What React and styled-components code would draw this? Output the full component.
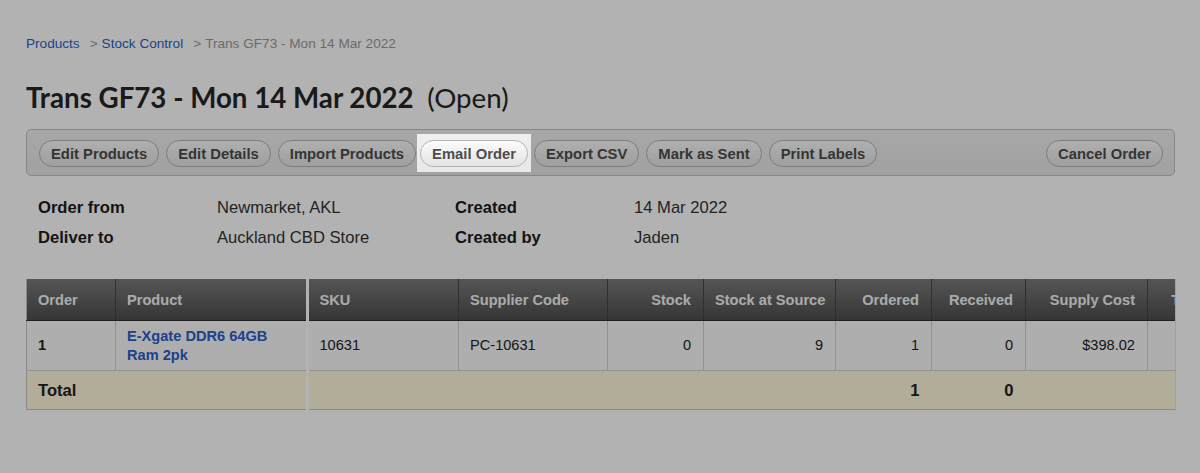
import React from "react";
import styled, { createGlobalStyle } from "styled-components";

const GlobalStyle = createGlobalStyle`
  html, body {
    margin: 0;
    padding: 0;
    background: #ffffff;
    min-height: 100%;
  }
  body {
    font-family: "Liberation Sans", Arial, Helvetica, sans-serif;
    color: #222;
    overflow: hidden;
  }
`;

const Page = styled.div`
  box-sizing: border-box;
  min-height: 100vh;
  padding: 36px 25px 0 26px;
`;

const Breadcrumb = styled.div`
  display: flex;
  align-items: center;
  font-size: 13.6px;
  line-height: 16px;
  color: #9a9a9a;
`;

const Crumb = styled.a`
  color: #2a5ec9;
  text-decoration: none;
`;

const Sep = styled.span`
  margin: 0 4px 0 10px;
`;

const Title = styled.h1`
  margin: 29px 0 0;
  font-family: Lato, "Open Sans", sans-serif;
  font-size: 27.7px;
  line-height: 34px;
  font-weight: 700;
  color: #262626;
`;

const Status = styled.span`
  font-weight: 400;
  margin-left: 7px;
`;

const Toolbar = styled.div`
  margin-top: 14px;
  display: flex;
  align-items: center;
  gap: 7px;
  padding: 10px 11px 8px 12px;
  border: 1px solid #c2c2c2;
  border-radius: 5px;
  background: linear-gradient(#f0f0f0, #e7e7e7);
`;

const Button = styled.button`
  height: 27px;
  padding: 0 11px;
  border: 1px solid #b2b2b2;
  border-radius: 14px;
  background: linear-gradient(#fbfbfb, #e4e4e4);
  font-family: "Liberation Sans", Arial, sans-serif;
  font-size: 14.8px;
  font-weight: 700;
  color: #4d4d4d;
  cursor: pointer;
  margin-left: ${(p) => (p.$push ? "auto" : "0")};
`;

// the highlighted button: everything else on the page gets dimmed
const Spotlight = styled.span`
  position: relative;
  z-index: 10;
  display: flex;
  padding: 6px 3px 5px;
  margin: -6px -4px -5px -6px;
  box-shadow: 0 0 0 3000px rgba(0, 0, 0, 0.3);
`;

const Details = styled.div`
  display: grid;
  grid-template-columns: 179px 238px 179px 1fr;
  row-gap: 11px;
  padding: 22px 12px 0;
  font-size: 16.6px;
  line-height: 19px;
`;

const Label = styled.div`
  font-weight: 700;
  color: #1c1c1c;
`;

const Value = styled.div`
  color: #333;
`;

const Tables = styled.div`
  margin-top: 32px;
  display: flex;
  gap: 3px;
  align-items: flex-start;
`;

const Scroll = styled.div`
  flex: none;
  width: 866px;
  min-width: 0;
  overflow: hidden;
  border-right: 1px solid #e6e6e6;
`;

const Table = styled.table`
  border-collapse: collapse;
  table-layout: fixed;
  font-size: 14.6px;
  width: ${(p) => p.$width}px;
  ${(p) => (p.$framed ? "border-left: 1px solid #c4c4c4;" : "")}
  border-bottom: 1px solid #c4c4c4;
`;

const Th = styled.th`
  height: 41px;
  padding: 0 12px 0 11px;
  text-align: ${(p) => (p.$right ? "right" : "left")};
  font-weight: 700;
  color: #f4f4f4;
  background: linear-gradient(#7a7a7a, #4e4e4e);
  border-left: 1px solid #444;
  border-bottom: 1px solid #2e2e2e;
  white-space: nowrap;
  overflow: hidden;
  &:first-child {
    border-left: none;
  }
`;

const Td = styled.td`
  height: ${(p) => (p.$total ? 38 : 49)}px;
  padding: 0 12px 0 11px;
  text-align: ${(p) => (p.$right ? "right" : "left")};
  background: ${(p) => (p.$total ? "#fff8dc" : "#fafafa")};
  border-left: ${(p) => (p.$total ? "none" : "1px solid #d2d2d2")};
  border-top: 1px solid #d2d2d2;
  font-weight: ${(p) => (p.$bold ? 700 : 400)};
  font-size: ${(p) => (p.$big ? 16.6 : 14.6)}px;
  color: #222;
  line-height: 19px;
  white-space: nowrap;
  &:first-child {
    border-left: none;
  }
`;

const ProductLink = styled.a`
  display: block;
  white-space: normal;
  color: #2a5ec9;
  font-weight: 700;
  text-decoration: none;
`;

const buttons = [
  "Edit Products",
  "Edit Details",
  "Import Products",
  "Email Order",
  "Export CSV",
  "Mark as Sent",
  "Print Labels",
];

const columns = [
  { name: "SKU", width: 150 },
  { name: "Supplier Code", width: 149 },
  { name: "Stock", width: 96, right: true },
  { name: "Stock at Source", width: 132, right: true },
  { name: "Ordered", width: 96, right: true },
  { name: "Received", width: 94, right: true },
  { name: "Supply Cost", width: 122, right: true },
  { name: "Total Cost", width: 106, right: true },
];

const row = ["10631", "PC-10631", "0", "9", "1", "0", "$398.02", ""];
const totals = ["", "", "", "", "1", "0", "", ""];

export default function App() {
  const rightWidth = columns.reduce((s, c) => s + c.width, 0);
  return (
    <>
      <GlobalStyle />
      <Page>
        <Breadcrumb>
          <Crumb href="#">Products</Crumb>
          <Sep>&gt;</Sep>
          <Crumb href="#">Stock Control</Crumb>
          <Sep>&gt;</Sep>
          <span>Trans GF73 - Mon 14 Mar 2022</span>
        </Breadcrumb>

        <Title>
          Trans GF73 - Mon 14 Mar 2022 <Status>(Open)</Status>
        </Title>

        <Toolbar>
          {buttons.map((b) =>
            b === "Email Order" ? (
              <Spotlight key={b}>
                <Button>{b}</Button>
              </Spotlight>
            ) : (
              <Button key={b}>{b}</Button>
            )
          )}
          <Button $push>Cancel Order</Button>
        </Toolbar>

        <Details>
          <Label>Order from</Label>
          <Value>Newmarket, AKL</Value>
          <Label>Created</Label>
          <Value>14 Mar 2022</Value>
          <Label>Deliver to</Label>
          <Value>Auckland CBD Store</Value>
          <Label>Created by</Label>
          <Value>Jaden</Value>
        </Details>

        <Tables>
          <Table $width={279} $framed>
            <colgroup>
              <col style={{ width: 89 }} />
              <col style={{ width: 190 }} />
            </colgroup>
            <thead>
              <tr>
                <Th>Order</Th>
                <Th>Product</Th>
              </tr>
            </thead>
            <tbody>
              <tr>
                <Td $bold>1</Td>
                <Td>
                  <ProductLink href="#">E-Xgate DDR6 64GB Ram 2pk</ProductLink>
                </Td>
              </tr>
              <tr>
                <Td $total $bold $big>Total</Td>
                <Td $total />
              </tr>
            </tbody>
          </Table>

          <Scroll>
            <Table $width={rightWidth}>
              <colgroup>
                {columns.map((c) => (
                  <col key={c.name} style={{ width: c.width }} />
                ))}
              </colgroup>
              <thead>
                <tr>
                  {columns.map((c) => (
                    <Th key={c.name} $right={c.right}>
                      {c.name}
                    </Th>
                  ))}
                </tr>
              </thead>
              <tbody>
                <tr>
                  {row.map((v, i) => (
                    <Td key={i} $right={columns[i].right}>
                      {v}
                    </Td>
                  ))}
                </tr>
                <tr>
                  {totals.map((v, i) => (
                    <Td key={i} $total $bold $big $right={columns[i].right}>
                      {v}
                    </Td>
                  ))}
                </tr>
              </tbody>
            </Table>
          </Scroll>
        </Tables>
      </Page>
    </>
  );
}
